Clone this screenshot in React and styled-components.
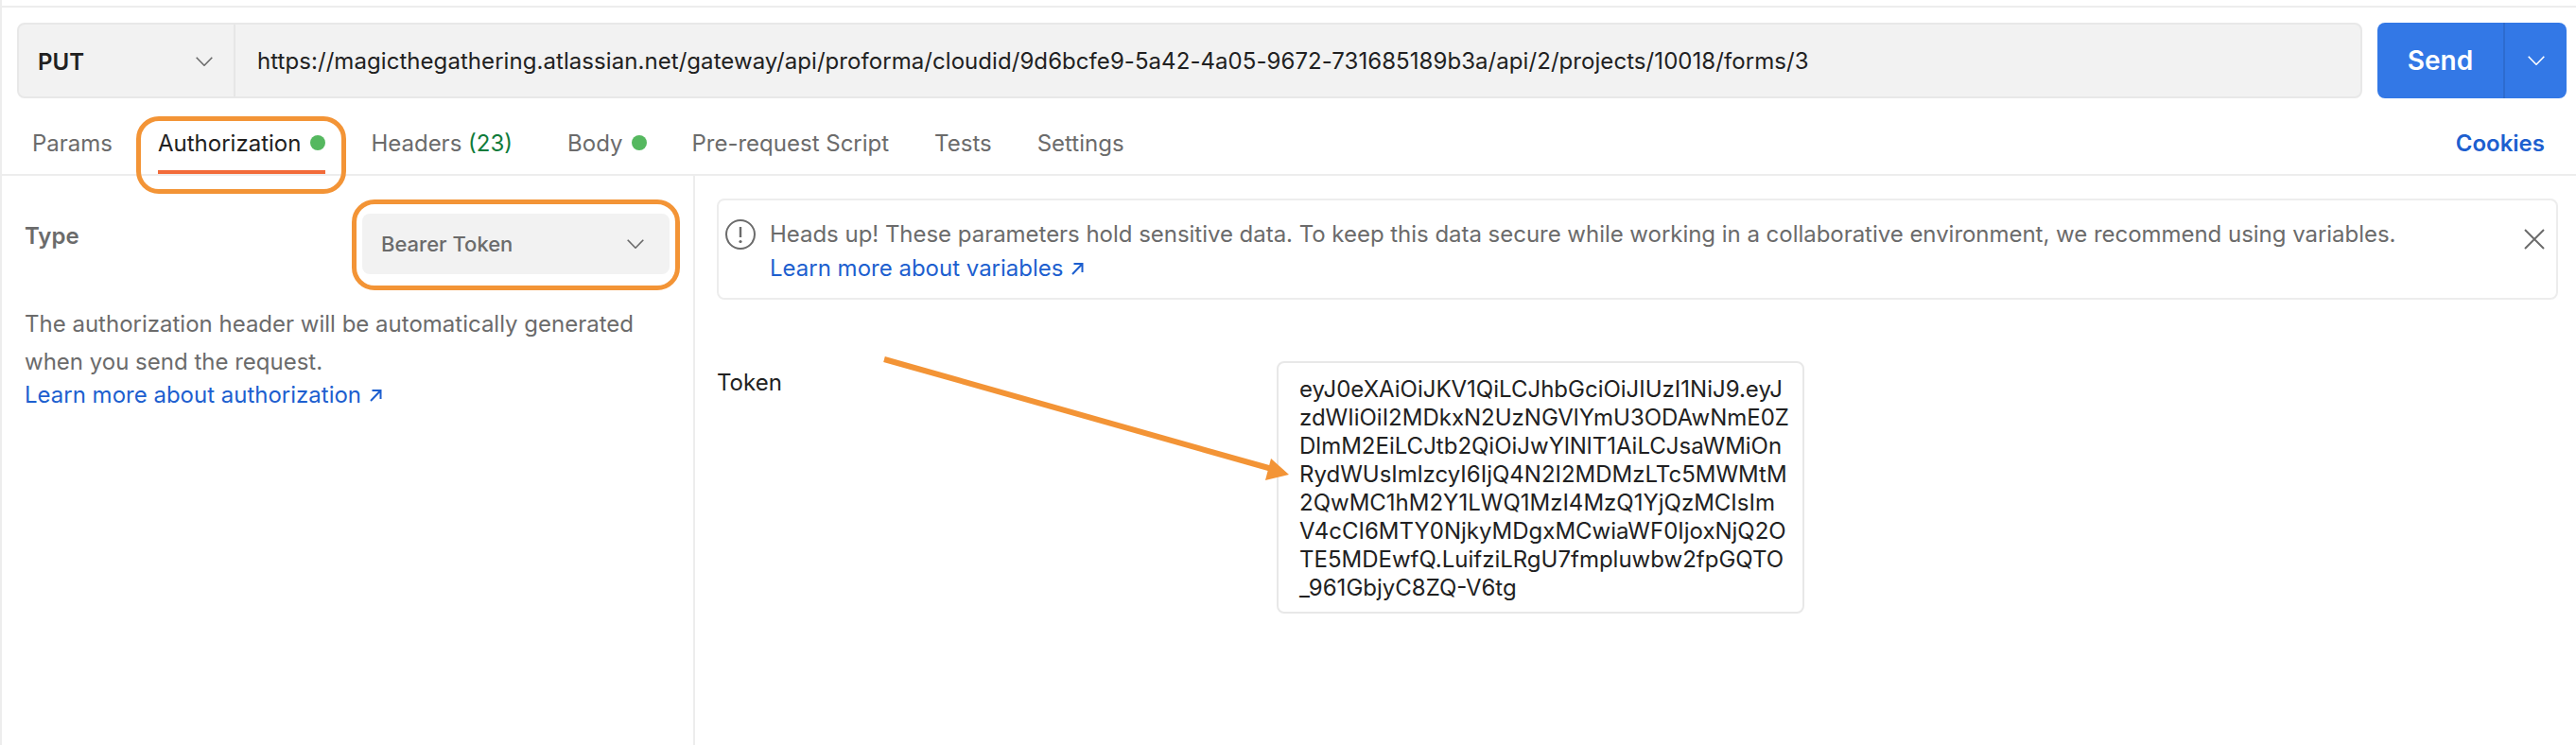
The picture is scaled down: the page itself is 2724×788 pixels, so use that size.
import React from "react";
import styled, { createGlobalStyle } from "styled-components";

const Global = createGlobalStyle`
  html, body { margin: 0; padding: 0; background: #fff; }
  body { font-family: Inter, "Noto Sans", sans-serif; }
  * { box-sizing: border-box; }
`;

const Page = styled.div`
  position: relative;
  width: 2724px;
  height: 788px;
  overflow: hidden;
  background: #fff;
  border-left: 2px solid #ededed;
  display: flex;
  flex-direction: column;
`;
const TopRule = styled.div`
  height: 2px;
  margin-top: 6px;
  background: #ededed;
  flex: none;
`;
const RequestRow = styled.div`
  display: flex;
  gap: 16px;
  padding: 16px 10px 0 16px;
  flex: none;
`;
const UrlBox = styled.div`
  flex: 1;
  height: 80px;
  display: flex;
  background: #f2f2f2;
  border: 2px solid #e8e8e8;
  border-radius: 8px;
`;
const MethodPicker = styled.div`
  width: 229px;
  display: flex;
  align-items: center;
  justify-content: space-between;
  padding: 2px 22px 0 20px;
  border-right: 2px solid #e6e6e6;
  font-size: 24px;
  font-weight: 600;
  color: #212121;
`;
const UrlText = styled.div`
  padding-left: 23px;
  display: flex;
  align-items: center;
  font-size: 24px;
  letter-spacing: 0.06px;
  color: #212121;
  white-space: nowrap;
`;
const SendGroup = styled.div`
  width: 200px;
  height: 80px;
  display: flex;
  background: #3378e6;
  border-radius: 8px;
  color: #fff;
`;
const SendLabel = styled.div`
  width: 135px;
  display: flex;
  align-items: center;
  justify-content: center;
  font-size: 28px;
  font-weight: 600;
  border-right: 2px solid #2d6ccf;
`;
const SendCaret = styled.div`
  flex: 1;
  display: flex;
  align-items: center;
  justify-content: center;
`;
const TabBar = styled.div`
  height: 82px;
  display: flex;
  align-items: stretch;
  justify-content: space-between;
  border-bottom: 2px solid #ededed;
  padding: 0 33px 0 32px;
  flex: none;
`;
const TabList = styled.div`
  display: flex;
  gap: 48px;
`;
const Tab = styled.div`
  position: relative;
  display: flex;
  align-items: center;
  gap: 10px;
  padding-top: 14px;
  margin-right: ${(p) => p.$extra || 0}px;
  margin-left: ${(p) => p.$pull || 0}px;
  font-size: 24px;
  color: ${(p) => (p.$active ? "#212121" : "#6b6b6b")};
  white-space: nowrap;
`;
const Underline = styled.div`
  position: absolute;
  left: 0;
  right: 0;
  bottom: 0;
  height: 4px;
  background: #f26b3a;
`;
const Dot = styled.span`
  width: 16px;
  height: 16px;
  border-radius: 50%;
  background: #55b85f;
  flex: none;
`;
const Count = styled.span`
  color: #0f7b3a;
`;
const Cookies = styled.div`
  display: flex;
  align-items: center;
  padding-top: 14px;
  font-size: 24px;
  font-weight: 600;
  color: #1d5fcf;
`;
const Ring = styled.div`
  position: absolute;
  top: ${(p) => p.$t}px;
  right: ${(p) => p.$r}px;
  bottom: ${(p) => p.$b}px;
  left: ${(p) => p.$l}px;
  border: 5px solid #f39436;
  border-radius: 24px;
  pointer-events: none;
`;
const Split = styled.div`
  flex: 1;
  display: grid;
  grid-template-columns: 733px 1fr;
  min-height: 0;
`;
const AuthPane = styled.div`
  border-right: 2px solid #ededed;
  padding: 40px 25px 0 24px;
`;
const TypeRow = styled.div`
  display: flex;
  justify-content: space-between;
  align-items: flex-start;
`;
const TypeLabel = styled.div`
  font-size: 24px;
  font-weight: 600;
  color: #6b6b6b;
  line-height: 48px;
`;
const TypeSelect = styled.div`
  position: relative;
  width: 325px;
  height: 64px;
  display: flex;
  align-items: center;
  justify-content: space-between;
  padding: 0 27px 0 20px;
  border-radius: 8px;
  background: #f2f2f2;
  font-size: 22px;
  font-weight: 500;
  color: #6b6b6b;
`;
const HelpText = styled.p`
  margin: 33px 0 0;
  font-size: 24px;
  line-height: 40px;
  color: #6b6b6b;
`;
const LearnLink = styled.a`
  display: inline-flex;
  align-items: center;
  gap: 8px;
  font-size: 24px;
  line-height: 30px;
  letter-spacing: 0;
  color: #1d5fcf;
  text-decoration: none;
`;
const FormPane = styled.div`
  padding: 24px 19px 0 23px;
`;
const Notice = styled.div`
  height: 107px;
  display: flex;
  align-items: flex-start;
  gap: 15px;
  padding: 20px 12px 0 7px;
  border: 2px solid #ededed;
  border-radius: 8px;
`;
const NoticeBody = styled.div`
  flex: 1;
  margin-top: -2px;
  font-size: 24px;
  letter-spacing: -0.03px;
  color: #6b6b6b;
  line-height: 36px;
`;
const Close = styled.div`
  padding: 10px 0 0;
  display: flex;
`;
const TokenRow = styled.div`
  margin-top: 65px;
  display: flex;
  align-items: flex-start;
`;
const TokenLabel = styled.div`
  width: 592px;
  font-size: 24px;
  color: #212121;
  line-height: 46px;
`;
const TokenBox = styled.div`
  width: 558px;
  height: 267px;
  padding: 13px 22px;
  border: 2px solid #e8e8e8;
  border-radius: 8px;
  font-size: 24px;
  line-height: 30px;
  color: #212121;
`;
const TokenLine = styled.div`
  white-space: nowrap;
`;
const ArrowLayer = styled.svg`
  position: absolute;
  left: -2px;
  top: 0;
  pointer-events: none;
`;

const Chevron = ({ color = "#6b6b6b" }) => (
  <svg width="18" height="10" viewBox="0 0 18 10" fill="none">
    <polyline points="0.7,0.7 9,9.2 17.3,0.7" stroke={color} strokeWidth="1.6" />
  </svg>
);
const OutArrow = () => (
  <svg width="14" height="14" viewBox="0 0 14 14" fill="none">
    <path d="M2 13 L12 2.5 M3.5 2 H12.5 V11" stroke="#1d5fcf" strokeWidth="2" />
  </svg>
);

const TOKEN = [
  "eyJ0eXAiOiJKV1QiLCJhbGciOiJIUzI1NiJ9.eyJ",
  "zdWIiOiI2MDkxN2UzNGVlYmU3ODAwNmE0Z",
  "DlmM2EiLCJtb2QiOiJwYlNlT1AiLCJsaWMiOn",
  "RydWUsImlzcyI6IjQ4N2I2MDMzLTc5MWMtM",
  "2QwMC1hM2Y1LWQ1MzI4MzQ1YjQzMCIsIm",
  "V4cCI6MTY0NjkyMDgxMCwiaWF0IjoxNjQ2O",
  "TE5MDEwfQ.LuifziLRgU7fmpluwbw2fpGQTO",
  "_961GbjyC8ZQ-V6tg",
];

export default function App() {
  return (
    <>
      <Global />
      <Page>
        <TopRule />
        <RequestRow>
          <UrlBox>
            <MethodPicker>
              PUT
              <Chevron />
            </MethodPicker>
            <UrlText>
              https://magicthegathering.atlassian.net/gateway/api/proforma/cloudid/9d6bcfe9-5a42-4a05-9672-731685189b3a/api/2/projects/10018/forms/3
            </UrlText>
          </UrlBox>
          <SendGroup>
            <SendLabel>Send</SendLabel>
            <SendCaret>
              <Chevron color="#fff" />
            </SendCaret>
          </SendGroup>
        </RequestRow>
        <TabBar>
          <TabList>
            <Tab>Params</Tab>
            <Tab $active>
              Authorization
              <Dot />
              <Underline />
              <Ring $t={19} $r={-22} $b={-21} $l={-23} />
            </Tab>
            <Tab $extra={10}>
              <span>
                Headers <Count>(23)</Count>
              </span>
            </Tab>
            <Tab>
              Body
              <Dot />
            </Tab>
            <Tab $pull={-1}>Pre-request Script</Tab>
            <Tab>Tests</Tab>
            <Tab>Settings</Tab>
          </TabList>
          <Cookies>Cookies</Cookies>
        </TabBar>
        <Split>
          <AuthPane>
            <TypeRow>
              <TypeLabel>Type</TypeLabel>
              <TypeSelect>
                Bearer Token
                <Chevron />
                <Ring $t={-15} $r={-11} $b={-17} $l={-11} />
              </TypeSelect>
            </TypeRow>
            <HelpText>
              The authorization header will be automatically generated
              <br />
              when you send the request.
            </HelpText>
            <LearnLink href="#">
              Learn more about authorization <OutArrow />
            </LearnLink>
          </AuthPane>
          <FormPane>
            <Notice>
              <svg width="32" height="32" viewBox="0 0 32 32" fill="none">
                <circle cx="16" cy="16" r="15" stroke="#6b6b6b" strokeWidth="2" />
                <path d="M16 8 V19" stroke="#6b6b6b" strokeWidth="2.4" />
                <circle cx="16" cy="23.5" r="1.6" fill="#6b6b6b" />
              </svg>
              <NoticeBody>
                Heads up! These parameters hold sensitive data. To keep this data secure while working in a collaborative environment, we recommend using variables.
                <br />
                <LearnLink href="#">
                  Learn more about variables <OutArrow />
                </LearnLink>
              </NoticeBody>
              <Close>
                <svg width="22" height="22" viewBox="0 0 22 22" fill="none">
                  <path d="M1 1 L21 21 M21 1 L1 21" stroke="#6b6b6b" strokeWidth="2" />
                </svg>
              </Close>
            </Notice>
            <TokenRow>
              <TokenLabel>Token</TokenLabel>
              <TokenBox>
                {TOKEN.map((line) => (
                  <TokenLine key={line}>{line}</TokenLine>
                ))}
              </TokenBox>
            </TokenRow>
          </FormPane>
        </Split>
        <ArrowLayer width="2724" height="788" viewBox="0 0 2724 788" fill="none">
          <line x1="935" y1="380" x2="1345" y2="496" stroke="#f39436" strokeWidth="6" />
          <polygon points="1363,502 1344,485 1338,508" fill="#f39436" />
        </ArrowLayer>
      </Page>
    </>
  );
}
